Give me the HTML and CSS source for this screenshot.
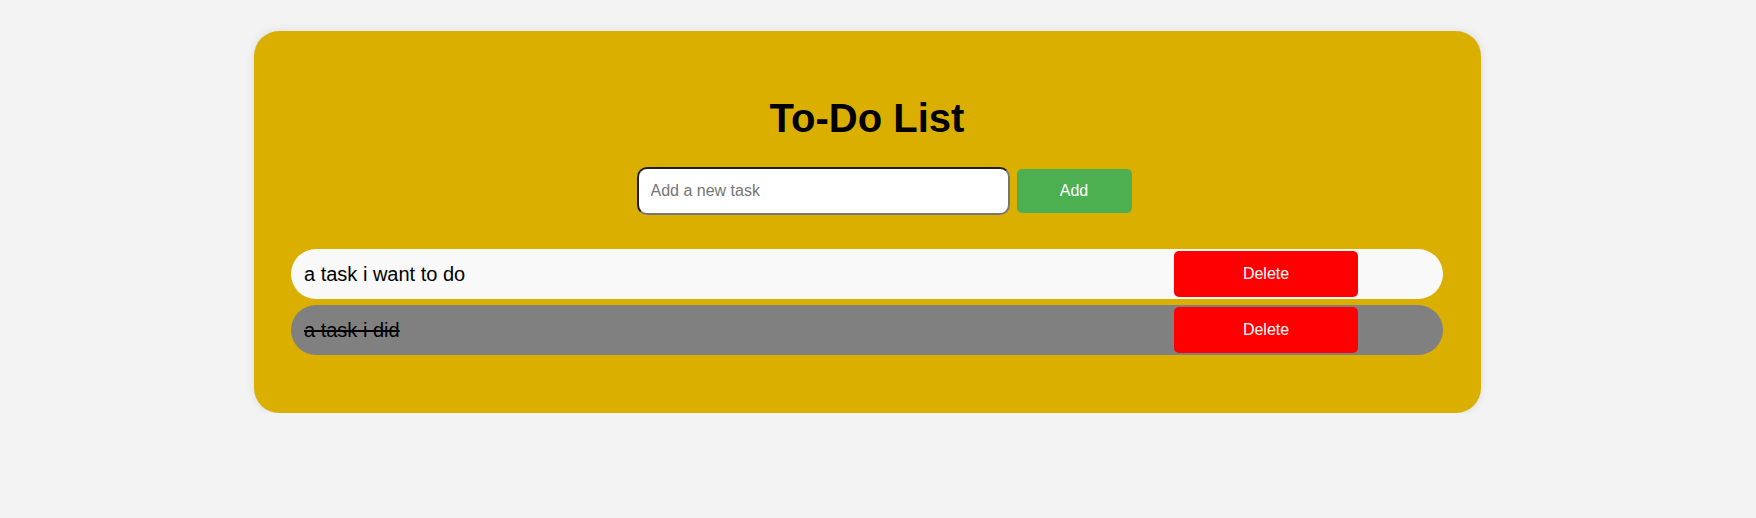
FILE: index.html
```html
<!DOCTYPE html>
<html lang="en">
<head>
<meta charset="utf-8">
<title>To-Do List</title>
<link rel="stylesheet" href="styles.css">
</head>
<body>
<div class="card">
  <h1 class="title">To-Do List</h1>
  <div class="add-row">
    <input class="task-input" type="text" placeholder="Add a new task">
    <button class="add-btn">Add</button>
  </div>
  <ul class="tasks">
    <li class="task">
      <span class="task-text">a task i want to do</span>
      <button class="delete-btn">Delete</button>
    </li>
    <li class="task done">
      <span class="task-text">a task i did</span>
      <button class="delete-btn">Delete</button>
    </li>
  </ul>
</div>
</body>
</html>
```

FILE: styles.css
```css
* { box-sizing: border-box; }

body {
  margin: 0;
  background: #f3f3f3;
  font-family: "Liberation Sans", Arial, sans-serif;
  color: #000;
}

.card {
  width: 1227px;
  margin: 31px 0 0 254px;
  padding: 64px 38px 58px 37px;
  background: #daaf00;
  border-radius: 25px;
  box-shadow: 0 0 10px rgba(0, 0, 0, 0.1);
}

.title {
  margin: 0;
  font-size: 40px;
  line-height: 46px;
  font-weight: bold;
  text-align: center;
}

.add-row {
  margin-top: 26px;
  display: flex;
  justify-content: center;
  align-items: center;
  padding-left: 34px;
}

.task-input {
  width: 373px;
  height: 48px;
  padding: 0 12px;
  border: 2px solid;
  border-color: #1e1e1e #767676 #767676 #1e1e1e;
  border-radius: 10px;
  background: #fff;
  font-family: "Liberation Sans", Arial, sans-serif;
  font-size: 16px;
  outline: none;
}

.task-input::placeholder { color: #757575; }

.add-btn {
  margin-left: 7px;
  width: 115px;
  height: 44px;
  border: none;
  border-radius: 5px;
  background: #4caf50;
  color: #fff;
  font-family: "Liberation Sans", Arial, sans-serif;
  font-size: 16px;
}

.tasks {
  list-style: none;
  margin: 34px 0 0;
  padding: 0;
  display: flex;
  flex-direction: column;
  gap: 6px;
}

.task {
  height: 50px;
  display: flex;
  align-items: center;
  padding-left: 13px;
  background: #f9f9f9;
  border-radius: 25px;
}

.task.done { background: #808080; }
.task.done .task-text { text-decoration: line-through; }

.task-text {
  flex: 1;
  font-size: 20px;
}

.delete-btn {
  width: 184px;
  height: 46px;
  margin-right: 85px;
  border: none;
  border-radius: 5px;
  background: #ff0000;
  color: #fff;
  font-family: "Liberation Sans", Arial, sans-serif;
  font-size: 16px;
}
```
